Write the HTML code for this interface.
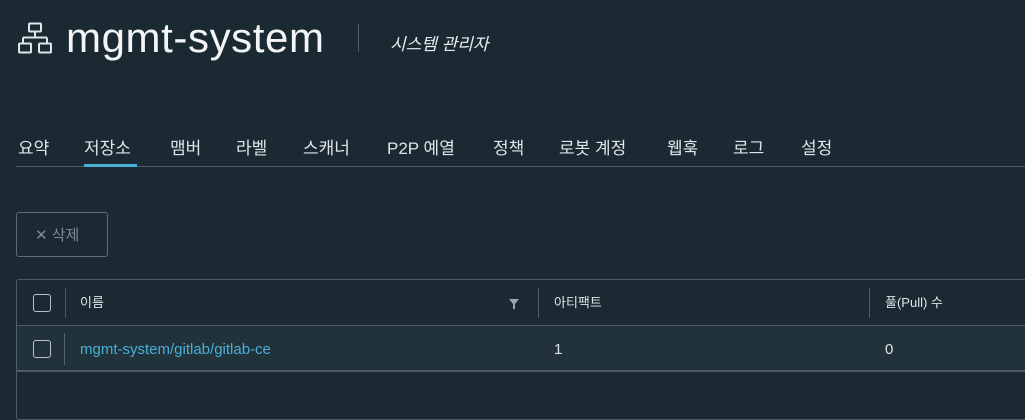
<!DOCTYPE html><html><head><meta charset="utf-8"><style>
*{margin:0;padding:0;box-sizing:border-box}
body{width:1025px;height:420px;background:#1b2a32;overflow:hidden;font-family:"Liberation Sans","Noto Sans CJK KR",sans-serif;color:#e9ecef;position:relative}
.a{position:absolute;white-space:nowrap}
.tab{position:absolute;top:134px;font-size:17px;color:#dfe5e8}
.cb{position:absolute;width:18px;height:18px;border:1px solid #b8c1c6;border-radius:3px}
.sep{position:absolute;width:1px;background:#4a5a62}
</style></head><body>
<svg class="a" style="left:18px;top:22px" width="34" height="32" viewBox="0 0 34 32" fill="none" stroke="#dfe5e8" stroke-width="2"><rect x="11" y="1.5" width="12" height="8" rx="1"/><path d="M17 9.5v6M5 15.5h24M5 15.5v6M29 15.5v6"/><rect x="1" y="21.5" width="12" height="9" rx="1"/><rect x="21" y="21.5" width="12" height="9" rx="1"/></svg>
<div class="a" style="left:66px;top:14px;font-size:42px;letter-spacing:0.6px;color:#f3f5f6">mgmt-system</div>
<div class="a" style="left:358px;top:24px;width:1px;height:28px;background:#4e5d65"></div>
<div class="a" style="left:390px;top:30px;font-size:17px;font-style:italic;color:#e9ecef">시스템 관리자</div>
<div class="tab" style="left:18px">요약</div>
<div class="tab" style="left:84px">저장소</div>
<div class="tab" style="left:170px">맴버</div>
<div class="tab" style="left:236px">라벨</div>
<div class="tab" style="left:303px">스캐너</div>
<div class="tab" style="left:387px">P2P 예열</div>
<div class="tab" style="left:493px">정책</div>
<div class="tab" style="left:559px">로봇 계정</div>
<div class="tab" style="left:667px">웹훅</div>
<div class="tab" style="left:733px">로그</div>
<div class="tab" style="left:801px">설정</div>
<div class="a" style="left:16px;top:166px;width:1009px;height:1px;background:#4e5d65"></div>
<div class="a" style="left:84px;top:164px;width:53px;height:3px;background:#49afd9"></div>
<div class="a" style="left:16px;top:212px;width:92px;height:45px;border:1px solid #5e6e76;border-radius:3px;font-size:15px;color:#7d8a90;padding:11px 0 0 18px">✕ 삭제</div>
<div class="a" style="left:16px;top:279px;width:1012px;height:141px;border:1px solid #4e5d65;border-radius:3px;background:#1b2a32"></div>
<div class="a" style="left:17px;top:325px;width:1008px;height:47px;background:#21323a;border-top:1px solid #4e5d65;border-bottom:2px solid #4e5d65"></div>
<div class="cb" style="left:33px;top:294px"></div>
<div class="sep" style="left:65px;top:288px;height:30px"></div>
<div class="a" style="left:80px;top:292px;font-size:13px;color:#dfe5e8">이름</div>
<svg class="a" style="left:508px;top:298px" width="12" height="12" viewBox="0 0 12 12"><path d="M1 1h10L7 6v5H5V6z" fill="#9aa5ab"/></svg>
<div class="sep" style="left:538px;top:288px;height:30px"></div>
<div class="a" style="left:554px;top:292px;font-size:13px;color:#dfe5e8">아티팩트</div>
<div class="sep" style="left:869px;top:288px;height:30px"></div>
<div class="a" style="left:885px;top:292px;font-size:13px;color:#dfe5e8">풀(Pull) 수</div>
<div class="cb" style="left:33px;top:340px"></div>
<div class="sep" style="left:64px;top:333px;height:32px;background:#55656d"></div>
<div class="a" style="left:80px;top:341px;font-size:15px;color:#49afd9">mgmt-system/gitlab/gitlab-ce</div>
<div class="a" style="left:554px;top:341px;font-size:15px;color:#dfe5e8">1</div>
<div class="a" style="left:885px;top:341px;font-size:15px;color:#dfe5e8">0</div>
</body></html>
